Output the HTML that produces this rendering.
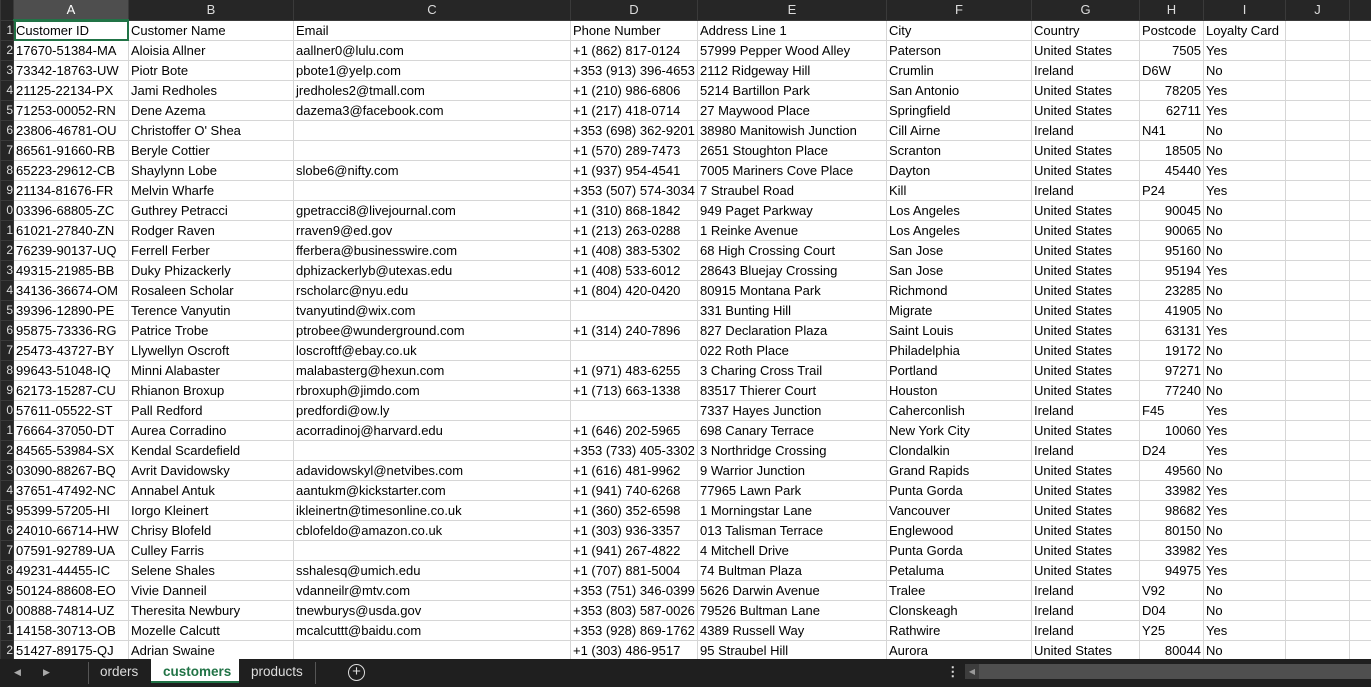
<!DOCTYPE html>
<html><head><meta charset="utf-8"><style>
*{margin:0;padding:0;box-sizing:border-box}
body{width:1371px;height:687px;overflow:hidden;background:#fff;font-family:"Liberation Sans",sans-serif;font-size:13px;position:relative}
table{border-collapse:collapse;table-layout:fixed;position:absolute;left:0;top:0;width:1371px}
td{height:20px;border:1px solid #d6d6d6;white-space:nowrap;overflow:hidden;padding:0 2px;color:#000;line-height:19px}
tr.h td{height:19px;background:#262626;color:#dcdcdc;text-align:center;border-color:#3a3a3a;border-top:none;font-size:13px}
tr.h td.sel{background:#4e4e4e;color:#fff;border-bottom:2px solid #217346}
td.n{background:#262626;color:#dcdcdc;padding:0;text-align:right;border-color:#3a3a3a;font-size:12px}
td.r{text-align:right}
#tabs{position:absolute;left:0;top:659px;width:1371px;height:28px;background:#1f1f1f;color:#ddd;font-size:13.5px}
#tabs span{position:absolute;top:5px}
</style></head><body>
<table>
<colgroup><col style="width:13px"><col style="width:115px"><col style="width:165px"><col style="width:277px"><col style="width:127px"><col style="width:189px"><col style="width:145px"><col style="width:108px"><col style="width:64px"><col style="width:82px"><col style="width:64px"><col style="width:22px"></colgroup>
<tr class="h"><td></td><td class="sel">A</td><td>B</td><td>C</td><td>D</td><td>E</td><td>F</td><td>G</td><td>H</td><td>I</td><td>J</td><td></td></tr>
<tr><td class="n">1</td><td style="outline:2px solid #217346;outline-offset:-2px">Customer ID</td><td>Customer Name</td><td>Email</td><td>Phone Number</td><td>Address Line 1</td><td>City</td><td>Country</td><td>Postcode</td><td>Loyalty Card</td><td></td><td></td></tr>
<tr><td class="n">2</td><td>17670-51384-MA</td><td>Aloisia Allner</td><td>aallner0@lulu.com</td><td>+1 (862) 817-0124</td><td>57999 Pepper Wood Alley</td><td>Paterson</td><td>United States</td><td class="r">7505</td><td>Yes</td><td></td><td></td></tr>
<tr><td class="n">3</td><td>73342-18763-UW</td><td>Piotr Bote</td><td>pbote1@yelp.com</td><td>+353 (913) 396-4653</td><td>2112 Ridgeway Hill</td><td>Crumlin</td><td>Ireland</td><td>D6W</td><td>No</td><td></td><td></td></tr>
<tr><td class="n">4</td><td>21125-22134-PX</td><td>Jami Redholes</td><td>jredholes2@tmall.com</td><td>+1 (210) 986-6806</td><td>5214 Bartillon Park</td><td>San Antonio</td><td>United States</td><td class="r">78205</td><td>Yes</td><td></td><td></td></tr>
<tr><td class="n">5</td><td>71253-00052-RN</td><td>Dene Azema</td><td>dazema3@facebook.com</td><td>+1 (217) 418-0714</td><td>27 Maywood Place</td><td>Springfield</td><td>United States</td><td class="r">62711</td><td>Yes</td><td></td><td></td></tr>
<tr><td class="n">6</td><td>23806-46781-OU</td><td>Christoffer O' Shea</td><td></td><td>+353 (698) 362-9201</td><td>38980 Manitowish Junction</td><td>Cill Airne</td><td>Ireland</td><td>N41</td><td>No</td><td></td><td></td></tr>
<tr><td class="n">7</td><td>86561-91660-RB</td><td>Beryle Cottier</td><td></td><td>+1 (570) 289-7473</td><td>2651 Stoughton Place</td><td>Scranton</td><td>United States</td><td class="r">18505</td><td>No</td><td></td><td></td></tr>
<tr><td class="n">8</td><td>65223-29612-CB</td><td>Shaylynn Lobe</td><td>slobe6@nifty.com</td><td>+1 (937) 954-4541</td><td>7005 Mariners Cove Place</td><td>Dayton</td><td>United States</td><td class="r">45440</td><td>Yes</td><td></td><td></td></tr>
<tr><td class="n">9</td><td>21134-81676-FR</td><td>Melvin Wharfe</td><td></td><td>+353 (507) 574-3034</td><td>7 Straubel Road</td><td>Kill</td><td>Ireland</td><td>P24</td><td>Yes</td><td></td><td></td></tr>
<tr><td class="n">0</td><td>03396-68805-ZC</td><td>Guthrey Petracci</td><td>gpetracci8@livejournal.com</td><td>+1 (310) 868-1842</td><td>949 Paget Parkway</td><td>Los Angeles</td><td>United States</td><td class="r">90045</td><td>No</td><td></td><td></td></tr>
<tr><td class="n">1</td><td>61021-27840-ZN</td><td>Rodger Raven</td><td>rraven9@ed.gov</td><td>+1 (213) 263-0288</td><td>1 Reinke Avenue</td><td>Los Angeles</td><td>United States</td><td class="r">90065</td><td>No</td><td></td><td></td></tr>
<tr><td class="n">2</td><td>76239-90137-UQ</td><td>Ferrell Ferber</td><td>fferbera@businesswire.com</td><td>+1 (408) 383-5302</td><td>68 High Crossing Court</td><td>San Jose</td><td>United States</td><td class="r">95160</td><td>No</td><td></td><td></td></tr>
<tr><td class="n">3</td><td>49315-21985-BB</td><td>Duky Phizackerly</td><td>dphizackerlyb@utexas.edu</td><td>+1 (408) 533-6012</td><td>28643 Bluejay Crossing</td><td>San Jose</td><td>United States</td><td class="r">95194</td><td>Yes</td><td></td><td></td></tr>
<tr><td class="n">4</td><td>34136-36674-OM</td><td>Rosaleen Scholar</td><td>rscholarc@nyu.edu</td><td>+1 (804) 420-0420</td><td>80915 Montana Park</td><td>Richmond</td><td>United States</td><td class="r">23285</td><td>No</td><td></td><td></td></tr>
<tr><td class="n">5</td><td>39396-12890-PE</td><td>Terence Vanyutin</td><td>tvanyutind@wix.com</td><td></td><td>331 Bunting Hill</td><td>Migrate</td><td>United States</td><td class="r">41905</td><td>No</td><td></td><td></td></tr>
<tr><td class="n">6</td><td>95875-73336-RG</td><td>Patrice Trobe</td><td>ptrobee@wunderground.com</td><td>+1 (314) 240-7896</td><td>827 Declaration Plaza</td><td>Saint Louis</td><td>United States</td><td class="r">63131</td><td>Yes</td><td></td><td></td></tr>
<tr><td class="n">7</td><td>25473-43727-BY</td><td>Llywellyn Oscroft</td><td>loscroftf@ebay.co.uk</td><td></td><td>022 Roth Place</td><td>Philadelphia</td><td>United States</td><td class="r">19172</td><td>No</td><td></td><td></td></tr>
<tr><td class="n">8</td><td>99643-51048-IQ</td><td>Minni Alabaster</td><td>malabasterg@hexun.com</td><td>+1 (971) 483-6255</td><td>3 Charing Cross Trail</td><td>Portland</td><td>United States</td><td class="r">97271</td><td>No</td><td></td><td></td></tr>
<tr><td class="n">9</td><td>62173-15287-CU</td><td>Rhianon Broxup</td><td>rbroxuph@jimdo.com</td><td>+1 (713) 663-1338</td><td>83517 Thierer Court</td><td>Houston</td><td>United States</td><td class="r">77240</td><td>No</td><td></td><td></td></tr>
<tr><td class="n">0</td><td>57611-05522-ST</td><td>Pall Redford</td><td>predfordi@ow.ly</td><td></td><td>7337 Hayes Junction</td><td>Caherconlish</td><td>Ireland</td><td>F45</td><td>Yes</td><td></td><td></td></tr>
<tr><td class="n">1</td><td>76664-37050-DT</td><td>Aurea Corradino</td><td>acorradinoj@harvard.edu</td><td>+1 (646) 202-5965</td><td>698 Canary Terrace</td><td>New York City</td><td>United States</td><td class="r">10060</td><td>Yes</td><td></td><td></td></tr>
<tr><td class="n">2</td><td>84565-53984-SX</td><td>Kendal Scardefield</td><td></td><td>+353 (733) 405-3302</td><td>3 Northridge Crossing</td><td>Clondalkin</td><td>Ireland</td><td>D24</td><td>Yes</td><td></td><td></td></tr>
<tr><td class="n">3</td><td>03090-88267-BQ</td><td>Avrit Davidowsky</td><td>adavidowskyl@netvibes.com</td><td>+1 (616) 481-9962</td><td>9 Warrior Junction</td><td>Grand Rapids</td><td>United States</td><td class="r">49560</td><td>No</td><td></td><td></td></tr>
<tr><td class="n">4</td><td>37651-47492-NC</td><td>Annabel Antuk</td><td>aantukm@kickstarter.com</td><td>+1 (941) 740-6268</td><td>77965 Lawn Park</td><td>Punta Gorda</td><td>United States</td><td class="r">33982</td><td>Yes</td><td></td><td></td></tr>
<tr><td class="n">5</td><td>95399-57205-HI</td><td>Iorgo Kleinert</td><td>ikleinertn@timesonline.co.uk</td><td>+1 (360) 352-6598</td><td>1 Morningstar Lane</td><td>Vancouver</td><td>United States</td><td class="r">98682</td><td>Yes</td><td></td><td></td></tr>
<tr><td class="n">6</td><td>24010-66714-HW</td><td>Chrisy Blofeld</td><td>cblofeldo@amazon.co.uk</td><td>+1 (303) 936-3357</td><td>013 Talisman Terrace</td><td>Englewood</td><td>United States</td><td class="r">80150</td><td>No</td><td></td><td></td></tr>
<tr><td class="n">7</td><td>07591-92789-UA</td><td>Culley Farris</td><td></td><td>+1 (941) 267-4822</td><td>4 Mitchell Drive</td><td>Punta Gorda</td><td>United States</td><td class="r">33982</td><td>Yes</td><td></td><td></td></tr>
<tr><td class="n">8</td><td>49231-44455-IC</td><td>Selene Shales</td><td>sshalesq@umich.edu</td><td>+1 (707) 881-5004</td><td>74 Bultman Plaza</td><td>Petaluma</td><td>United States</td><td class="r">94975</td><td>Yes</td><td></td><td></td></tr>
<tr><td class="n">9</td><td>50124-88608-EO</td><td>Vivie Danneil</td><td>vdanneilr@mtv.com</td><td>+353 (751) 346-0399</td><td>5626 Darwin Avenue</td><td>Tralee</td><td>Ireland</td><td>V92</td><td>No</td><td></td><td></td></tr>
<tr><td class="n">0</td><td>00888-74814-UZ</td><td>Theresita Newbury</td><td>tnewburys@usda.gov</td><td>+353 (803) 587-0026</td><td>79526 Bultman Lane</td><td>Clonskeagh</td><td>Ireland</td><td>D04</td><td>No</td><td></td><td></td></tr>
<tr><td class="n">1</td><td>14158-30713-OB</td><td>Mozelle Calcutt</td><td>mcalcuttt@baidu.com</td><td>+353 (928) 869-1762</td><td>4389 Russell Way</td><td>Rathwire</td><td>Ireland</td><td>Y25</td><td>Yes</td><td></td><td></td></tr>
<tr><td class="n">2</td><td>51427-89175-QJ</td><td>Adrian Swaine</td><td></td><td>+1 (303) 486-9517</td><td>95 Straubel Hill</td><td>Aurora</td><td>United States</td><td class="r">80044</td><td>No</td><td></td><td></td></tr>
</table>
<div id="tabs">
<span style="left:14px;font-size:9px;top:8px;color:#aaa">&#9664;</span>
<span style="left:43px;font-size:9px;top:8px;color:#aaa">&#9654;</span>
<div style="position:absolute;left:88px;top:3px;width:1px;height:22px;background:#555"></div>
<span style="left:100px">orders</span>
<div style="position:absolute;left:151px;top:0;width:88px;height:24px;background:#fff;border-bottom:2px solid #217346"></div>
<span style="left:163px;color:#217346;font-weight:bold">customers</span>
<span style="left:251px">products</span>
<div style="position:absolute;left:315px;top:3px;width:1px;height:22px;background:#555"></div>
<div style="position:absolute;left:348px;top:5px;width:17px;height:17px;border:1.5px solid #ddd;border-radius:50%;text-align:center;line-height:13px;font-size:15px;color:#ddd">+</div>
<span style="left:946px;font-weight:bold">&#8942;</span>
<div style="position:absolute;left:965px;top:5px;width:406px;height:15px;background:#4f4f4f"></div>
<div style="position:absolute;left:965px;top:5px;width:14px;height:15px;background:#3d3d3d;color:#999;font-size:8px;line-height:15px;text-align:center">&#9664;</div>
</div>
</body></html>
